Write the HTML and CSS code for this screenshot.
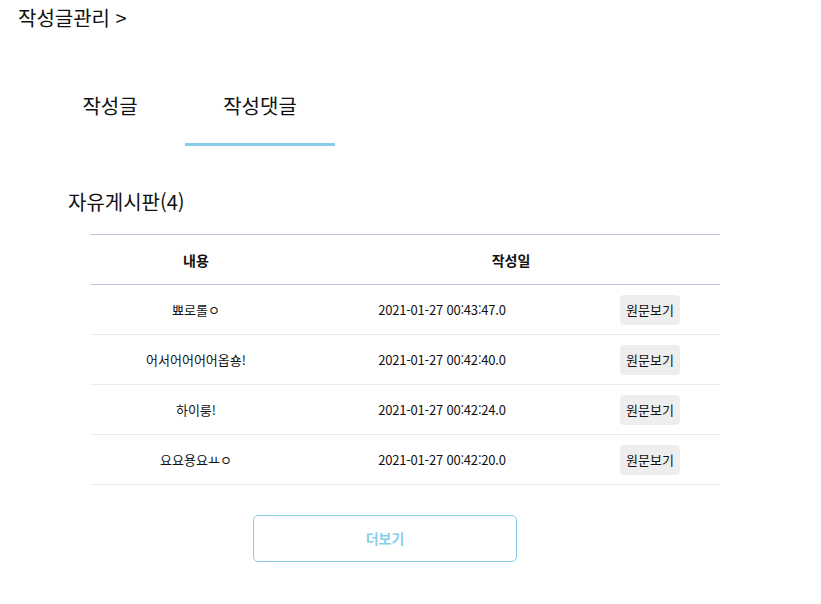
FILE: index.html
```html
<!DOCTYPE html>
<html lang="ko">
<head>
<meta charset="utf-8">
<link rel="stylesheet" href="styles.css">
</head>
<body>
<div class="page-title">작성글관리 &gt;</div>
<div class="tabs">
  <div class="tab">작성글</div>
  <div class="tab active">작성댓글</div>
</div>
<div class="board-title">자유게시판(4)</div>
<div class="board">
  <div class="head">
    <div class="cell">내용</div>
    <div class="cell">작성일</div>
  </div>
  <div class="row">
    <div class="cell">뾰로롤ㅇ</div>
    <div class="cell">2021-01-27 00:43:47.0</div>
    <div class="cell"><span class="view-btn">원문보기</span></div>
  </div>
  <div class="row">
    <div class="cell">어서어어어어옵숑!</div>
    <div class="cell">2021-01-27 00:42:40.0</div>
    <div class="cell"><span class="view-btn">원문보기</span></div>
  </div>
  <div class="row">
    <div class="cell">하이룽!</div>
    <div class="cell">2021-01-27 00:42:24.0</div>
    <div class="cell"><span class="view-btn">원문보기</span></div>
  </div>
  <div class="row">
    <div class="cell">요요용요ㅛㅇ</div>
    <div class="cell">2021-01-27 00:42:20.0</div>
    <div class="cell"><span class="view-btn">원문보기</span></div>
  </div>
</div>
<div class="more">더보기</div>
</body>
</html>
```

FILE: styles.css
```css
* { box-sizing: border-box; }
body {
  margin: 0;
  background: #fff;
  color: #111;
  font-family: "Noto Sans CJK KR", "Noto Sans", sans-serif;
}
.page-title {
  margin: 6px 0 0 18px;
  font-size: 20px;
  line-height: 24px;
}
.tabs {
  display: flex;
  margin: 36px 0 0 35px;
}
.tab {
  width: 150px;
  text-align: center;
  font-size: 20px;
  line-height: 24px;
  padding: 28px 0 25px;
  border-bottom: 3px solid transparent;
}
.tab.active {
  border-bottom-color: #87ceeb;
}
.board-title {
  margin: 42px 0 0 68px;
  font-size: 20px;
  line-height: 28px;
}
.board {
  width: 630px;
  margin: 18px 0 0 90px;
  border-top: 1px solid #c3c0d9;
  font-size: 13px;
}
.head, .row {
  display: grid;
  height: 50px;
  align-items: center;
  text-align: center;
}
.head {
  grid-template-columns: 212px 1fr;
  border-bottom: 1px solid #c3c0d9;
  font-weight: bold;
  font-size: 14px;
}
.row {
  grid-template-columns: 212px 280px 1fr;
  border-bottom: 1px solid #ebebeb;
}
.row .cell:nth-child(2) {
  letter-spacing: -0.2px;
}
.view-btn {
  display: inline-block;
  width: 60px;
  height: 30px;
  line-height: 30px;
  background: #eeeeee;
  border-radius: 4px;
  margin-right: 2px;
}
.more {
  width: 264px;
  height: 47px;
  margin: 30px 0 0 253px;
  border: 1px solid #87ceeb;
  border-radius: 5px;
  color: #87ceeb;
  font-weight: bold;
  font-size: 14px;
  line-height: 45px;
  text-align: center;
}
```
